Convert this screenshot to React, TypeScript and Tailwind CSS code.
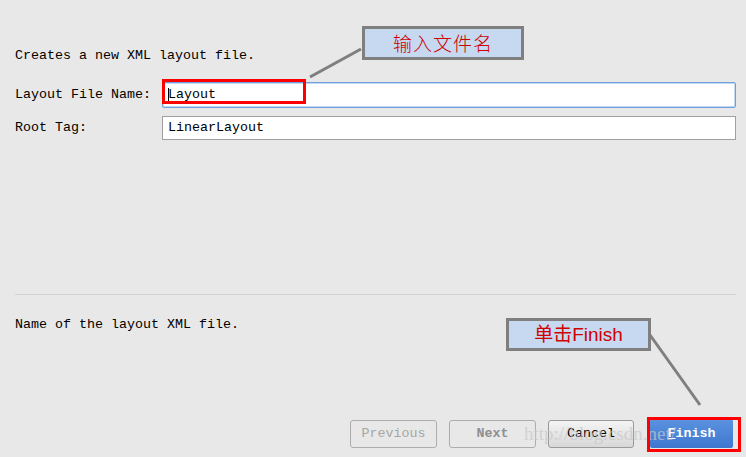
import React from "react";

const mono = { fontFamily: '"Liberation Mono", "DejaVu Sans Mono", monospace' };

export default function App() {
  return (
    <div
      className="relative w-[746px] h-[457px] bg-[#e8e8e8] text-[13.33px] leading-[16px] text-black overflow-hidden flex flex-col px-[15px] pt-[48px]"
      style={mono}
    >
      <div>Creates a new XML layout file.</div>

      <div className="mt-[18px] flex items-center mr-[-5px]">
        <div className="w-[147px] shrink-0">Layout File Name:</div>
        <div className="relative flex-1 h-[26px] bg-white border border-[#6f9fdc] shadow-[inset_0_0_0_1px_#c3d8f2] rounded-[2px] flex items-center pl-[5px]">
          <span className="relative">
            Layout
            <span className="absolute left-0 top-[1px] w-px h-[14px] bg-black" />
          </span>
        </div>
      </div>

      <div className="mt-[8px] flex items-center mr-[-5px]">
        <div className="w-[147px] shrink-0">Root Tag:</div>
        <div className="flex-1 h-[24px] bg-white border border-[#a0a0a0] flex items-center pl-[5px]">
          LinearLayout
        </div>
      </div>

      <div className="mt-[154px] h-px bg-[#d2d2d2] mr-[-5px]" />

      <div className="mt-[22px]">Name of the layout XML file.</div>

      <div className="mt-auto mb-[9px] mr-[-2px] flex items-center justify-end">
        <div className="w-[87px] h-[28px] rounded-[3px] border border-[#adadad] flex items-center justify-center text-[#a6a6a6]">
          Previous
        </div>
        <div className="ml-[12px] w-[87px] h-[28px] rounded-[3px] border border-[#adadad] flex items-center justify-center text-[#8f8f8f] font-bold">
          Next
        </div>
        <div className="ml-[12px] w-[86px] h-[28px] rounded-[3px] border border-[#9a9a9a] bg-gradient-to-b from-[#f4f4f4] to-[#d8d8d8] flex items-center justify-center">
          Cancel
        </div>
        <div className="relative ml-[16px] w-[83px] h-[29px] rounded-[2px] bg-gradient-to-b from-[#5b93e0] to-[#3f77cf] flex items-center justify-center text-white font-bold">
          <span>
            <span className="underline">F</span>inish
          </span>
        </div>
      </div>

      {/* watermark */}
      <div
        className="absolute left-[524px] top-[422px] text-[19px] leading-[24px] text-[#c8c8c8] opacity-70 pointer-events-none"
        style={{ fontFamily: '"Liberation Serif", serif' }}
      >
        http://blog.csdn.net/
      </div>

      {/* red highlight boxes */}
      <div className="absolute left-[162px] top-[79px] w-[144px] h-[25px] border-[3px] border-[#ff0000] pointer-events-none" />
      <div className="absolute left-[647px] top-[417px] w-[94px] h-[35px] border-[3px] border-[#ff0000] pointer-events-none" />

      {/* connector lines */}
      <svg className="absolute left-0 top-0 pointer-events-none" width="746" height="457">
        <line x1="361" y1="49" x2="310" y2="77" stroke="#7f7f7f" strokeWidth="3" />
        <line x1="650" y1="335" x2="700" y2="405" stroke="#7f7f7f" strokeWidth="3" />
      </svg>

      {/* callouts */}
      <div
        className="absolute left-[362px] top-[26px] w-[162px] h-[34px] bg-[#c6d9f1] border-[3px] border-[#7f7f7f] flex items-center justify-center text-[19px] text-[#d00000] tracking-[1px] font-light"
        style={{ fontFamily: '"Noto Sans CJK SC", sans-serif' }}
      >
        输入文件名
      </div>
      <div
        className="absolute left-[506px] top-[318px] w-[145px] h-[33px] bg-[#c6d9f1] border-[3px] border-[#7f7f7f] flex items-center justify-center text-[19px] text-[#d00000]"
        style={{ fontFamily: '"Liberation Sans", "Noto Sans CJK SC", sans-serif' }}
      >
        单击Finish
      </div>
    </div>
  );
}
